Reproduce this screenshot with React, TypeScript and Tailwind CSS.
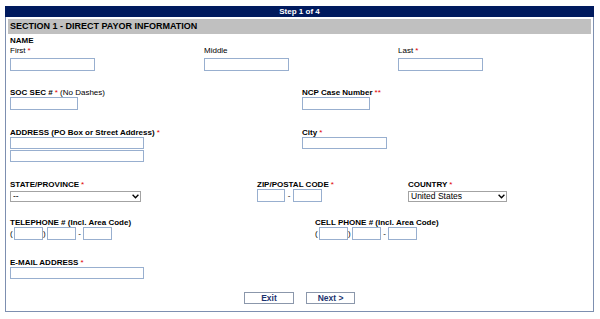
import React from "react";

const Req = ({ double }: { double?: boolean }) => (
  <span className="text-[#e00000] font-normal ml-[2px]">{double ? "**" : "*"}</span>
);

const Field = ({ w, h = 13 }: { w: number; h?: number }) => (
  <input
    type="text"
    className="block border border-[#98afcf] bg-white outline-none"
    style={{ width: w, height: h }}
  />
);

const Select = ({ w, value }: { w: number; value: string }) => (
  <div className="relative mt-[2px]" style={{ width: w }}>
    <select
      defaultValue={value}
      className="block w-full h-[11px] appearance-none border border-[#a3a3a3] bg-white px-[2px] py-0 text-[8.5px] leading-[9px] text-black outline-none"
    >
      <option>{value}</option>
    </select>
    <svg
      className="absolute right-[2px] top-[3px] pointer-events-none"
      width="7"
      height="5"
      viewBox="0 0 7 5"
    >
      <path d="M0.6 0.8 L3.5 3.8 L6.4 0.8" fill="none" stroke="#000" strokeWidth="1.3" />
    </svg>
  </div>
);

const Phone = () => (
  <div className="flex items-center text-[8px] text-black">
    <span className="w-[4px]">(</span>
    <Field w={29} />
    <span className="w-[4px]">)</span>
    <Field w={29} />
    <span className="w-[7px] text-center">-</span>
    <Field w={29} />
  </div>
);

const label = "text-[8px] font-bold leading-[9px] text-black whitespace-nowrap";

const App = () => {
  return (
    <div
      className="w-[600px] h-[319px] bg-white overflow-hidden pt-[6px] pl-[5px]"
      style={{ fontFamily: '"Liberation Sans", Arial, sans-serif' }}
    >
      <div className="w-[589px]">
        <div className="h-[11px] bg-[#001a5e] text-white text-[8px] font-bold leading-[11px] text-center">
          Step 1 of 4
        </div>
        <div className="border-x border-b border-[#7d8fb0] pt-[2px] pb-[7px]">
          <div className="mx-[2px] h-[15px] bg-[#c0c0c0] pl-[2px] text-[9px] font-bold leading-[15px] text-black">
            SECTION 1 - DIRECT PAYOR INFORMATION
          </div>

          <div className="pl-[4px]">
            {/* name */}
            <div className="mt-[2px] text-[8px] font-bold leading-[10px]">NAME</div>
            <div className="grid grid-cols-[194px_194px_194px]">
              <div>
                <div className="text-[8px] leading-[10px]">
                  First<Req />
                </div>
                <div className="mt-[2px]">
                  <Field w={85} />
                </div>
              </div>
              <div>
                <div className="text-[8px] leading-[10px]">Middle</div>
                <div className="mt-[2px]">
                  <Field w={85} />
                </div>
              </div>
              <div>
                <div className="text-[8px] leading-[10px]">
                  Last<Req />
                </div>
                <div className="mt-[2px]">
                  <Field w={85} />
                </div>
              </div>
            </div>

            {/* ssn / case */}
            <div className="mt-[17px] grid grid-cols-[292px_auto]">
              <div>
                <div className={label}>
                  SOC SEC #<Req /> <span className="font-normal">(No Dashes)</span>
                </div>
                <Field w={68} />
              </div>
              <div>
                <div className={label}>
                  NCP Case Number<Req double />
                </div>
                <Field w={68} />
              </div>
            </div>

            {/* address / city */}
            <div className="mt-[18px] grid grid-cols-[292px_auto]">
              <div>
                <div className={label}>
                  ADDRESS (PO Box or Street Address)<Req />
                </div>
                <div className="flex flex-col gap-[1px]">
                  <Field w={134} h={12} />
                  <Field w={134} h={12} />
                </div>
              </div>
              <div>
                <div className={label}>
                  City<Req />
                </div>
                <Field w={85} h={12} />
              </div>
            </div>

            {/* state / zip / country */}
            <div className="mt-[18px] grid grid-cols-[247px_151px_auto]">
              <div>
                <div className={label}>
                  STATE/PROVINCE<Req />
                </div>
                <Select w={131} value="--" />
              </div>
              <div>
                <div className={label}>
                  ZIP/POSTAL CODE<Req />
                </div>
                <div className="flex items-center text-[8px]">
                  <Field w={28} />
                  <span className="w-[8px] text-center">-</span>
                  <Field w={29} />
                </div>
              </div>
              <div>
                <div className={label}>
                  COUNTRY<Req />
                </div>
                <Select w={99} value="United States" />
              </div>
            </div>

            {/* phones */}
            <div className="mt-[16px] grid grid-cols-[305px_auto]">
              <div>
                <div className={label}>TELEPHONE # (Incl. Area Code)</div>
                <Phone />
              </div>
              <div>
                <div className={label}>CELL PHONE # (Incl. Area Code)</div>
                <Phone />
              </div>
            </div>

            {/* email */}
            <div className="mt-[18px]">
              <div className={label}>
                E-MAIL ADDRESS<Req />
              </div>
              <Field w={134} h={12} />
            </div>
          </div>

          <div className="mt-[13px] flex justify-center gap-[12px]">
            <button className="w-[50px] h-[12px] border border-[#8b97ab] bg-white text-[8.5px] font-bold leading-[10px] text-[#1d3470]">
              Exit
            </button>
            <button className="w-[49px] h-[12px] border border-[#8b97ab] bg-white text-[8.5px] font-bold leading-[10px] text-[#1d3470]">
              Next &gt;
            </button>
          </div>
        </div>
      </div>
    </div>
  );
};

export default App;
